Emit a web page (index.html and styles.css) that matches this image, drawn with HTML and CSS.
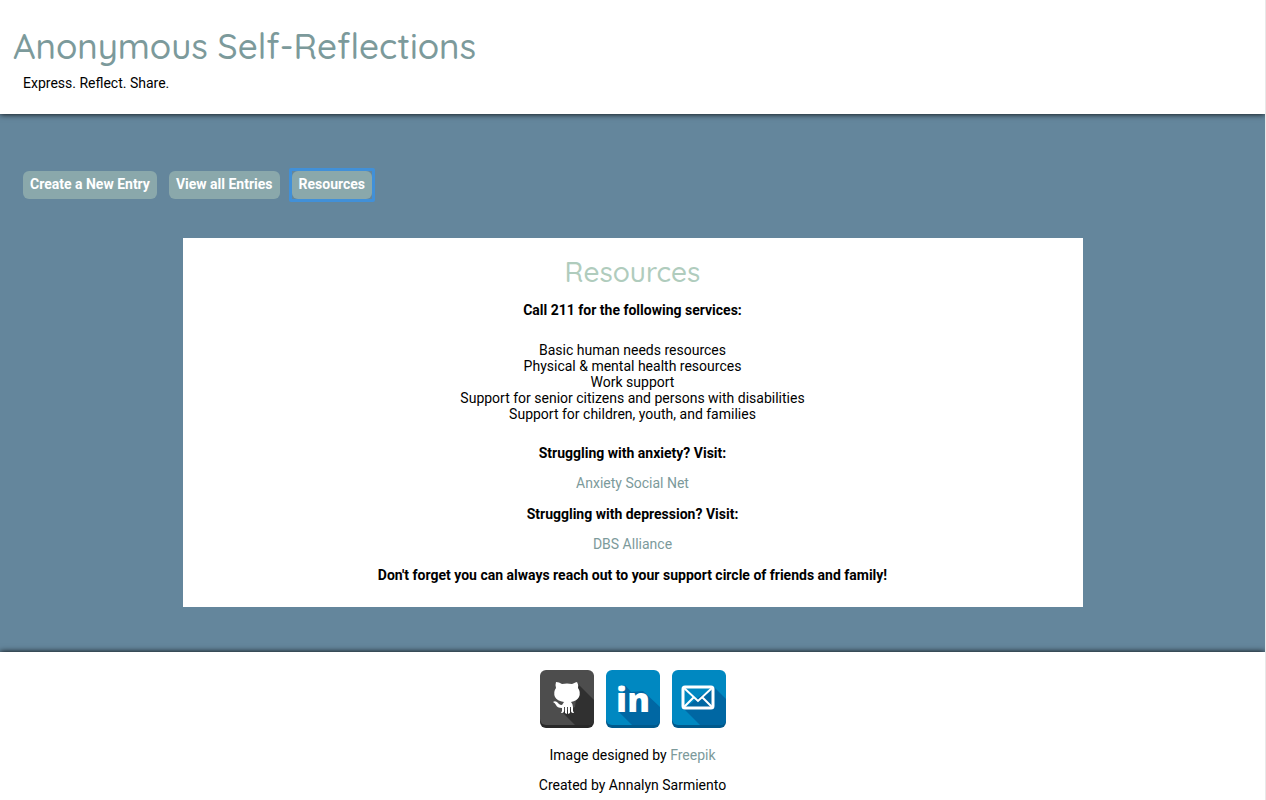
FILE: index.html
```html
<!DOCTYPE html>
<html lang="en">
<head>
<meta charset="utf-8">
<title>Anonymous Self-Reflections</title>
<link rel="stylesheet" href="styles.css">
</head>
<body>
<div class="page">
  <header class="site-header">
    <h1 class="site-title">Anonymous Self-Reflections</h1>
    <p class="tagline">Express. Reflect. Share.</p>
  </header>
  <main class="content">
    <nav class="menu">
      <button type="button" class="menu-button">Create a New Entry</button>
      <button type="button" class="menu-button">View all Entries</button>
      <button type="button" class="menu-button menu-button-active">Resources</button>
    </nav>
    <section class="card">
      <h2 class="card-title">Resources</h2>
      <p class="strong">Call 211 for the following services:</p>
      <ul class="services">
        <li>Basic human needs resources</li>
        <li>Physical &amp; mental health resources</li>
        <li>Work support</li>
        <li>Support for senior citizens and persons with disabilities</li>
        <li>Support for children, youth, and families</li>
      </ul>
      <p class="strong">Struggling with anxiety? Visit:</p>
      <p class="resource"><a class="link" href="#">Anxiety Social Net</a></p>
      <p class="strong">Struggling with depression? Visit:</p>
      <p class="resource"><a class="link" href="#">DBS Alliance</a></p>
      <p class="strong">Don't forget you can always reach out to your support circle of friends and family!</p>
    </section>
  </main>
  <footer class="site-footer">
    <div class="social">
      <a href="#" aria-label="GitHub">
        <svg class="icon" viewBox="0 0 56 60">
          <rect x="1" y="3" width="54" height="56" rx="6" fill="#282828"/>
          <rect x="1" y="1" width="54" height="55" rx="6" fill="#4d4d4d"/>
          <path d="M39 15L55 31V50Q55 56 49 56H36L23 43L36 38Z" fill="#303030"/>
          <path d="M17 13Q20 13 23 15Q28 14 33 15Q37 13 38 13Q40 16 39 19Q42 23 40 28Q38 32 32 33Q34 35 34 38V42L35 44Q32 44 32 42V38H31V44L29 45V38H28V45L26 44V38H25V42Q25 44 22 44L23 42V39Q18 39 17 36Q16 34 14 33Q17 31 20 35Q21 36 23 36L25 33Q18 32 16 28Q14 23 17 19Q16 16 17 13Z" fill="#fff"/>
        </svg>
      </a>
      <a href="#" aria-label="LinkedIn">
        <svg class="icon" viewBox="0 0 56 60">
          <rect x="1" y="3" width="54" height="56" rx="6" fill="#00598c"/>
          <rect x="1" y="1" width="54" height="55" rx="6" fill="#0088c1"/>
          <path d="M20 16L26 23L38 22L55 38V50Q55 56 49 56H27L13 42Z" fill="#0067a3"/>
          <text class="icon-text" x="28" y="43" text-anchor="middle">in</text>
        </svg>
      </a>
      <a href="#" aria-label="Email">
        <svg class="icon" viewBox="0 0 56 60">
          <rect x="1" y="3" width="54" height="56" rx="6" fill="#00598c"/>
          <rect x="1" y="1" width="54" height="55" rx="6" fill="#0088c1"/>
          <path d="M43 18L55 30V50Q55 56 49 56H29L13 40L28 28Z" fill="#0067a3"/>
          <g fill="none" stroke="#fff">
            <rect x="12" y="18" width="30" height="21" rx="2" stroke-width="3"/>
            <path d="M13 19L27 32L41 19M13 38L23 28M41 38L31 28" stroke-width="2"/>
          </g>
        </svg>
      </a>
    </div>
    <p>Image designed by <a class="link" href="#">Freepik</a></p>
    <p>Created by Annalyn Sarmiento</p>
  </footer>
</div>
</body>
</html>
```
FILE: styles.css
```css
body {
  margin: 0;
  font-family: Roboto, sans-serif;
  font-size: 14px;
  line-height: 16px;
  color: #000;
  background: #fff;
}
.page {
  border-right: 1px solid #e8e8e8;
}
p {
  margin: 0;
}
.site-header {
  position: relative;
  padding: 24px 13px 23px;
  background: #fff;
  box-shadow: 0 0 6px #000;
  clip-path: inset(0 0 -10px 0);
}
.site-title {
  margin: 0 0 7px;
  font-family: Quicksand, Lato, sans-serif;
  font-size: 35px;
  font-weight: 500;
  line-height: 44px;
  color: #7c9a9b;
}
.tagline {
  padding-left: 10px;
}
.content {
  padding: 57px 23px 45px;
  background: #64869c;
}
.menu {
  display: flex;
  gap: 12px;
  margin-bottom: 39px;
}
.menu-button {
  position: relative;
  padding: 5px 7px 7px;
  border: 0;
  border-radius: 6px;
  background: #8aa8ab;
  color: #fff;
  font: bold 14px/16px Roboto, sans-serif;
}
.menu-button-active::after {
  content: "";
  position: absolute;
  inset: -3px;
  border: 3px solid #4190d8;
  border-radius: 2px;
}
.card {
  display: flex;
  flex-direction: column;
  gap: 14px;
  max-width: 900px;
  margin: 0 auto;
  padding: 18px 0 24px;
  box-sizing: border-box;
  background: #fff;
  text-align: center;
}
.card-title {
  margin: 0;
  font-family: Quicksand, Lato, sans-serif;
  font-size: 28px;
  font-weight: 500;
  line-height: 32px;
  color: #b0ccbd;
}
.strong {
  font-weight: bold;
}
.services {
  margin: 10px 0 9px;
  padding: 0;
  list-style: none;
}
.resource {
  line-height: 17px;
}
.link {
  color: #7c9a9b;
  text-decoration: none;
}
.site-footer {
  position: relative;
  display: flex;
  flex-direction: column;
  gap: 14px;
  padding: 17px 0 7px;
  background: #fff;
  box-shadow: 0 0 6px #000;
  clip-path: inset(-10px 0 0 0);
  text-align: center;
}
.social {
  display: flex;
  justify-content: center;
  gap: 10px;
  margin-bottom: 4px;
}
.icon {
  display: block;
  width: 56px;
  height: 60px;
}
.icon-text {
  font: 800 34px "Open Sans", sans-serif;
  fill: #fff;
}
```
